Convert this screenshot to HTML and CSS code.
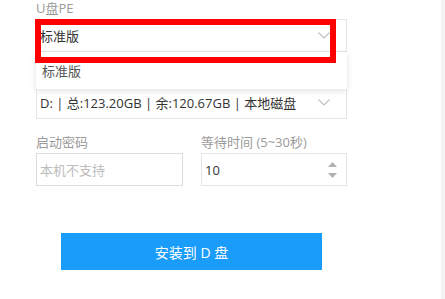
FILE: index.html
```html
<!DOCTYPE html>
<html lang="zh">
<head>
<meta charset="utf-8">
<link rel="stylesheet" href="styles.css">
</head>
<body>
<div class="page">
  <div class="form">
    <div class="group">
      <div class="label">U盘PE</div>
      <div class="select">
        <span class="value">标准版</span>
        <svg class="chev" width="12" height="7" viewBox="0 0 12 7"><path d="M0.5 0.5 L6 6 L11.5 0.5" fill="none" stroke="#bdbdbd" stroke-width="1.1"/></svg>
      </div>
      <div class="menu"><div class="item">标准版</div></div>
      <div class="annot"></div>
    </div>
    <div class="group">
      <div class="label"></div>
      <div class="select">
        <span class="value">D: | 总:123.20GB | 余:120.67GB | 本地磁盘</span>
        <svg class="chev" width="12" height="7" viewBox="0 0 12 7"><path d="M0.5 0.5 L6 6 L11.5 0.5" fill="none" stroke="#bdbdbd" stroke-width="1.1"/></svg>
      </div>
    </div>
    <div class="row">
      <div class="group col">
        <div class="label">启动密码</div>
        <div class="input"><span class="placeholder">本机不支持</span></div>
      </div>
      <div class="group col">
        <div class="label">等待时间 (5~30秒)</div>
        <div class="input">
          <span class="value">10</span>
          <span class="spin">
            <svg width="9" height="5" viewBox="0 0 9 5"><path d="M0 5 L4.5 0 L9 5 Z" fill="#b0b0b0"/></svg>
            <svg width="9" height="5" viewBox="0 0 9 5"><path d="M0 0 L4.5 5 L9 0 Z" fill="#b0b0b0"/></svg>
          </span>
        </div>
      </div>
    </div>
    <div class="actions">
      <button class="btn">安装到 D 盘</button>
    </div>
  </div>
  <div class="scroll"></div>
</div>
</body>
</html>
```
FILE: styles.css
```css
* { box-sizing: border-box; }
html, body { margin: 0; padding: 0; background: #fff; }
body {
  width: 445px;
  height: 299px;
  overflow: hidden;
  font-family: "Open Sans", "Noto Sans CJK SC", sans-serif;
  font-size: 13px;
  color: #333;
}
.page {
  display: flex;
  height: 299px;
}
.form {
  width: 441px;
  padding: 0 94px 0 36px;
  display: flex;
  flex-direction: column;
  gap: 15px;
  position: relative;
}
.scroll {
  width: 4px;
  background: #f3f3f3;
}
.group {
  display: flex;
  flex-direction: column;
  position: relative;
}
.label {
  height: 19px;
  line-height: 17px;
  color: #9a9a9a;
  font-size: 13px;
}
.select, .input {
  height: 33px;
  border: 1px solid #e6e6e6;
  display: flex;
  align-items: center;
  padding: 0 16px 0 3px;
  justify-content: space-between;
  background: #fff;
}
.value { color: #333; }
.placeholder { color: #bdbdbd; }
.chev { display: block; }
.row {
  display: flex;
  gap: 18px;
}
.col { flex: 0 0 auto; }
.row .col:first-child { width: 147px; }
.row .col:last-child { width: 146px; }
.row .col:first-child .input { border-color: #dcdcdc; }
.input { padding-right: 9px; }
.spin {
  display: flex;
  flex-direction: column;
  gap: 6px;
}
.spin svg { display: block; }
.menu {
  position: absolute;
  left: 0;
  top: 52px;
  width: 311px;
  height: 37px;
  background: #fff;
  box-shadow: 0 2px 6px rgba(0,0,0,0.12);
  z-index: 5;
  display: flex;
  align-items: center;
  padding-left: 6px;
}
.item { color: #555; }
.annot {
  position: absolute;
  left: -1px;
  top: 19px;
  width: 301px;
  height: 44px;
  border: 6px solid #f00;
  z-index: 6;
}
.actions {
  display: flex;
  justify-content: center;
  padding-top: 32px;
}
.btn {
  width: 261px;
  height: 37px;
  border: 0;
  background: #1a9cfa;
  color: #fff;
  font-family: "Open Sans", "Noto Sans CJK SC", sans-serif;
  font-size: 14px;
  padding: 0;
}
```
